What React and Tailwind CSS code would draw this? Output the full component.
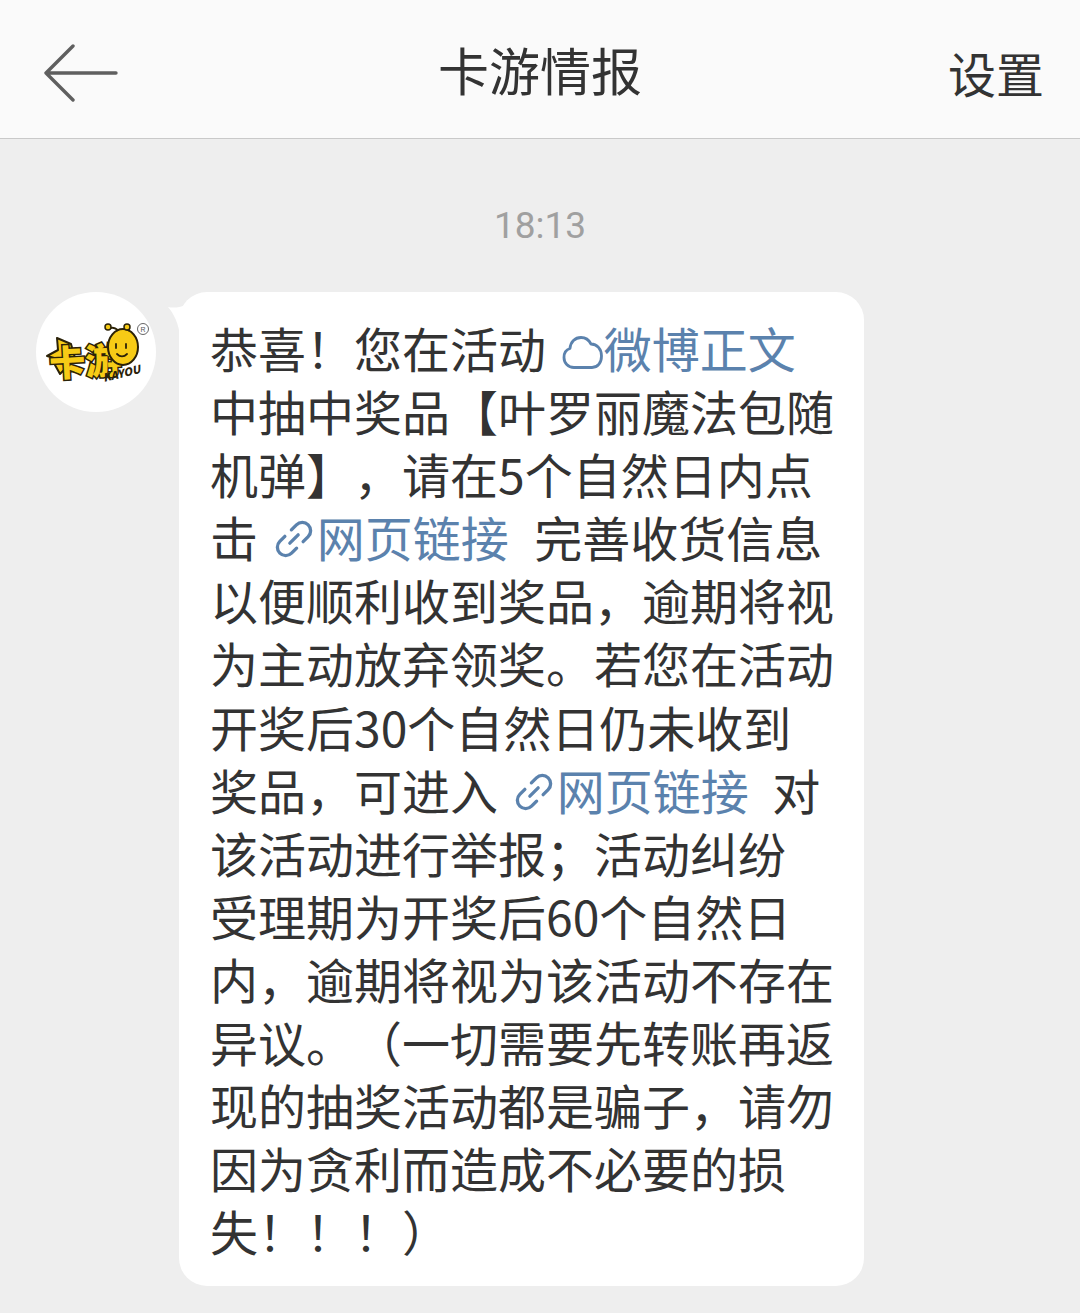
const font = { fontFamily: '"Noto Sans CJK SC", "Noto Sans", sans-serif' };

function CloudIcon() {
  return (
    <svg width="42" height="34" viewBox="0 0 42 34" fill="none" className="inline-block align-[-2px] ml-[5px]">
      <path
        d="M12 31.500C6 31.500 2 27 2 21.500 2 17 4.500 13.500 8 12.500 8.500 6 13 1.500 19 1.500c4.500 0 8 2.500 10 6.500 6 0 10.500 5 10.500 12 0 6.500-3.500 11.500-9.500 11.500z"
        stroke="#5b82ad"
        strokeWidth="2.800"
        strokeLinejoin="round"
      />
    </svg>
  );
}

function LinkIcon() {
  return (
    <svg width="38" height="38" viewBox="4 4 32 32" fill="none" className="inline-block align-[-1px] ml-[6px] mr-[4px]">
      <g stroke="#5b82ad" strokeWidth="2.800" strokeLinecap="round" strokeLinejoin="round">
        <path d="M17.800 12.300 22.050 8.050A7 7 0 0 1 31.950 17.950L27.700 22.200" />
        <path d="M22.200 27.700 17.950 31.950A7 7 0 0 1 8.050 22.050L12.300 17.800" />
        <path d="M16.500 23.500 23.500 16.500" />
      </g>
    </svg>
  );
}

function Logo() {
  return (
    <svg width="120" height="120" viewBox="0 0 120 120" className="block">
      <circle cx="60" cy="60" r="60" fill="#ffffff" />
      <path d="M11 64l11-6-1-12 14 6 4 14-7 8-8 8-5-9 3-6z" fill="#f7cb16" stroke="#2b2208" strokeWidth="2" strokeLinejoin="round" />
      <text
        x="14"
        y="85"
        fontSize="36"
        fontWeight="900"
        fill="#f7cb16"
        stroke="#2b2208"
        strokeWidth="3"
        style={{ ...font, paintOrder: "stroke" }}
        transform="rotate(-3 14 85)"
      >
        卡游
      </text>
      <text
        x="68"
        y="90"
        fontSize="11"
        fontWeight="900"
        fontStyle="italic"
        fill="#2b2208"
        style={font}
        transform="rotate(-14 68 90)"
      >
        KAYOU
      </text>
      <ellipse cx="87" cy="55" rx="15" ry="18" fill="#f7cb16" stroke="#2b2208" strokeWidth="2" />
      <path d="M82 39c-1-2-4-4-8-3M92 39c1-2 1-3 0-4" stroke="#2b2208" strokeWidth="2" fill="none" />
      <circle cx="72" cy="35" r="3" fill="#f7cb16" stroke="#2b2208" strokeWidth="1.500" />
      <circle cx="91" cy="35" r="3" fill="#f7cb16" stroke="#2b2208" strokeWidth="1.500" />
      <path d="M80 52v4M90 52v4M81 62c3 3 7 3 10 0" stroke="#2b2208" strokeWidth="1.800" fill="none" strokeLinecap="round" />
      <circle cx="107" cy="37" r="5.500" fill="none" stroke="#555555" strokeWidth="0.900" />
      <text x="104.500" y="40" fontSize="7" fill="#555555" style={{ fontFamily: '"Liberation Sans", sans-serif' }}>
        R
      </text>
    </svg>
  );
}

const L = ({ children }) => <span className="text-[#5b82ad] mr-[4px]">{children}</span>;

const lines = [
  <>恭喜！您在活动 <CloudIcon /><L>微博正文</L></>,
  "中抽中奖品【叶罗丽魔法包随",
  "机弹】，请在5个自然日内点",
  <>击 <LinkIcon /><L>网页链接</L>&nbsp; 完善收货信息</>,
  "以便顺利收到奖品，逾期将视",
  "为主动放弃领奖。若您在活动",
  "开奖后30个自然日仍未收到",
  <>奖品，可进入 <LinkIcon /><L>网页链接</L>&nbsp; <span className="ml-[-2px]">对</span></>,
  "该活动进行举报；活动纠纷",
  "受理期为开奖后60个自然日",
  "内，逾期将视为该活动不存在",
  "异议。（一切需要先转账再返",
  "现的抽奖活动都是骗子，请勿",
  "因为贪利而造成不必要的损",
  "失！！！）",
];

export default function App() {
  return (
    <div className="w-[1080px] h-[1313px] bg-[#eeeeee] overflow-hidden [text-spacing-trim:space-all]" style={font}>
      <header className="h-[139px] bg-[#fafafa] border-b border-[#c9c9c9] flex items-center justify-between pl-[44px] pr-[36px]">
        <svg width="74" height="58" viewBox="0 0 74 58" fill="none" className="mt-[8px]">
          <path d="M29 2 2 29l27 27M2 29h70" stroke="#5f5f5f" strokeWidth="3.400" strokeLinecap="round" strokeLinejoin="round" />
        </svg>
        <h1 className="text-[51px] leading-none text-[#333333] font-normal ml-[14px]">卡游情报</h1>
        <span className="text-[48px] leading-none text-[#333333] mt-[6px]">设置</span>
      </header>
      <p className="text-center text-[37px] leading-none text-[#a0a0a0] mt-[68px] font-['Roboto',sans-serif]">18:13</p>
      <div className="flex items-start pl-[36px] mt-[48px]">
        <div className="shrink-0">
          <Logo />
        </div>
        <div className="relative ml-[23px] w-[685px] h-[994px] bg-white rounded-[28px] pl-[31px] pt-[24px]">
          <svg width="17" height="32" viewBox="0 0 17 32" className="absolute left-[-11px] top-[13px]">
            <path d="M0 2C5 3 11 3 17 0V32H12C11 19 6 9 0 2Z" fill="#ffffff" />
          </svg>
          <div className="relative text-[48px] leading-[63.1px] text-[#333333] whitespace-nowrap">
            {lines.map((line, i) => (
              <div key={i}>{line}</div>
            ))}
          </div>
        </div>
      </div>
    </div>
  );
}
